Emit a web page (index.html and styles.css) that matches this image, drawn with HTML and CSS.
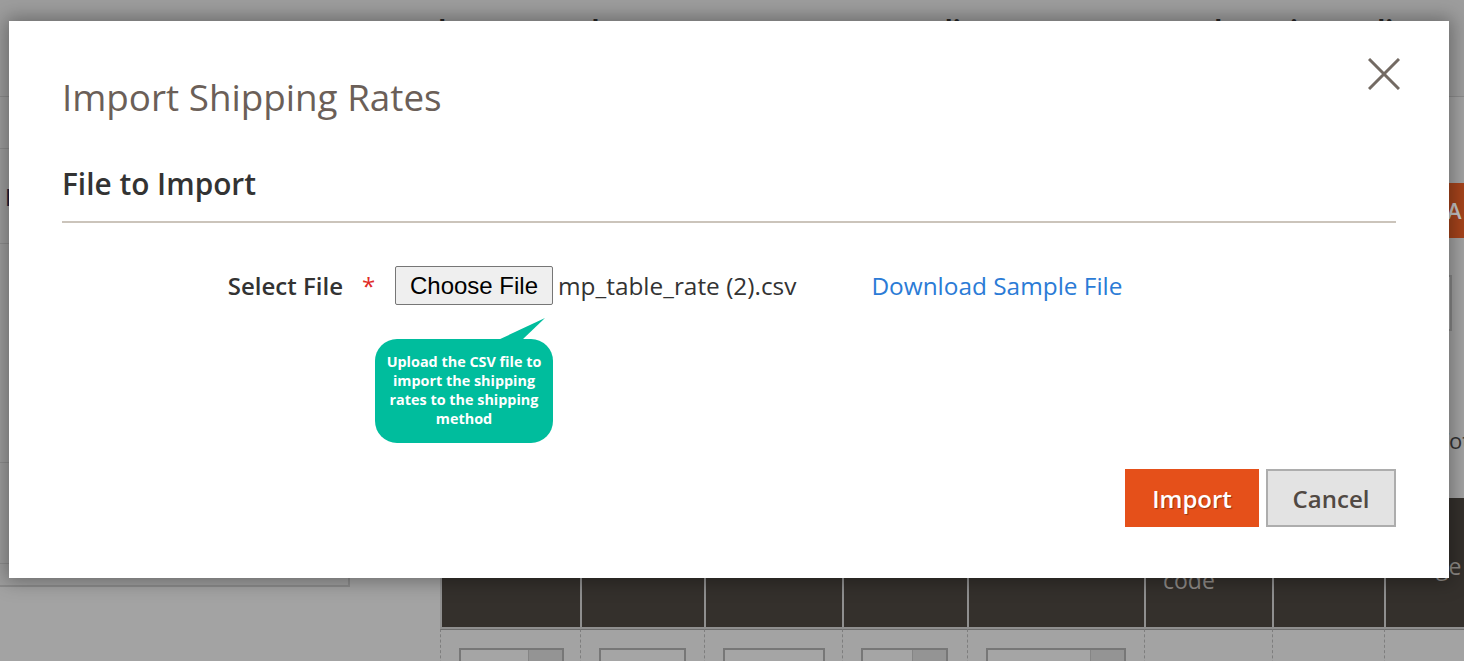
FILE: index.html
```html
<!DOCTYPE html>
<html lang="en">
<head>
<meta charset="utf-8">
<title>Import Shipping Rates</title>
<link rel="stylesheet" href="styles.css">
</head>
<body>

<div class="page">
  <div class="page-actions">
    <span class="act act-back">&larr; Back</span>
    <span class="act act-delete">Delete</span>
    <span class="act act-reset">Reset</span>
    <span class="act act-dup">Duplicate</span>
    <span class="act">Save and Continue Edit</span>
  </div>

  <div class="page-main">
    <div class="side-nav">
      <div class="nav-item nav-1"></div>
      <div class="nav-item nav-2"><span class="nav-title">Information</span></div>
      <div class="nav-item nav-3"></div>
      <div class="nav-item nav-4"></div>
    </div>

    <div class="content">
      <div class="toolbar"><span class="btn-add">Add</span></div>
      <div class="search-row"><span class="search-box"></span></div>
      <div class="note-row">Total 0 records found</div>

      <div class="grid">
        <div class="head-cell"></div>
        <div class="head-cell"></div>
        <div class="head-cell"></div>
        <div class="head-cell"></div>
        <div class="head-cell"></div>
        <div class="head-cell">Zip/Postal<br>code</div>
        <div class="head-cell"></div>
        <div class="head-cell head-low">Range</div>

        <div class="row-cell"><span class="input w105"><span class="addon"></span></span></div>
        <div class="row-cell"><span class="input w87"></span></div>
        <div class="row-cell"><span class="input w102"></span></div>
        <div class="row-cell"><span class="input w87"><span class="addon"></span></span></div>
        <div class="row-cell"><span class="input w140"><span class="addon"></span></span></div>
        <div class="row-cell"></div>
        <div class="row-cell"></div>
        <div class="row-cell"></div>
      </div>
    </div>
  </div>
</div>

<div class="modal">
  <h1 class="modal-title">Import Shipping Rates</h1>
  <button class="modal-close" type="button">
    <svg width="32" height="32" viewBox="0 0 32 32">
      <path d="M1 1 L31 31 M31 1 L1 31" stroke="#736a63" stroke-width="3" fill="none"/>
    </svg>
  </button>

  <h2 class="section-title">File to Import</h2>

  <div class="field-row">
    <span class="field-label">Select File</span>
    <span class="required">*</span>
    <button class="choose-btn" type="button">Choose File</button>
    <span class="file-name">mp_table_rate (2).csv</span>
    <a class="sample-link" href="#">Download Sample File</a>

    <div class="tip">Upload the CSV file to import the shipping rates to the shipping method</div>
  </div>

  <div class="modal-footer">
    <button class="btn-primary" type="button">Import</button>
    <button class="btn-secondary" type="button">Cancel</button>
  </div>
</div>

</body>
</html>
```

FILE: styles.css
```css
html, body {
    margin: 0;
    padding: 0;
}
body {
    width: 1464px;
    height: 661px;
    overflow: hidden;
    position: relative;
    background: #a3a3a3;
    font-family: "Open Sans", "Liberation Sans", sans-serif;
}

/* page behind the modal, already dimmed */
.page-actions {
    height: 97px;
    box-sizing: border-box;
    background: #9d9d9d;
    border-bottom: 1px solid #8c8c8c;
    display: flex;
    padding: 17px 0 0 359px;
    font-size: 26px;
    line-height: 26px;
    font-weight: 700;
    color: #262626;
    white-space: nowrap;
}
.act-back { width: 198px; }
.act-delete { width: 174px; }
.act-reset { width: 161px; }
.act-dup { width: 214px; }

.page-main {
    display: flex;
}
.side-nav {
    width: 350px;
    height: 490px;
    flex: none;
    box-sizing: border-box;
    background: #9e9e9e;
    border-right: 2px solid #8b8b8b;
    border-bottom: 2px solid #8b8b8b;
}
.nav-item {
    box-sizing: border-box;
    border-bottom: 1px solid #8e8e8e;
}
.nav-1 { height: 52px; }
.nav-2 { height: 95px; padding: 33px 0 0 5px; }
.nav-3 { height: 219px; }
.nav-4 { height: 101px; }
.nav-title {
    font-size: 24px;
    line-height: 30px;
    font-weight: 700;
    color: #1c1c3a;
}

.content {
    flex: 1;
    min-width: 0;
    display: flex;
    flex-direction: column;
}
.toolbar {
    margin-top: 86px;
    height: 55px;
    display: flex;
    justify-content: flex-end;
}
.btn-add {
    width: 120px;
    margin-right: -80px;
    padding-left: 23px;
    box-sizing: border-box;
    background: #a5431b;
    color: #c4c4c4;
    font-size: 22px;
    font-weight: 600;
    letter-spacing: 4px;
    line-height: 55px;
    white-space: nowrap;
}
.search-row {
    margin-top: 37px;
    height: 56px;
    display: flex;
    justify-content: flex-end;
}
.search-box {
    width: 600px;
    margin-right: 12px;
    box-sizing: border-box;
    border: 2px solid #878787;
    background: #a6a6a6;
}
.note-row {
    margin-top: 94px;
    padding-left: 1087px;
    font-size: 22px;
    line-height: 30px;
    color: #333;
    white-space: nowrap;
}

.grid {
    margin: 43px 0 0 90px;
    display: grid;
    grid-template-columns: 140px 124px 138px 125px 177px 128px 112px 140px;
}
.head-cell {
    height: 131px;
    box-sizing: border-box;
    background: #34302c;
    border-left: 2px solid #8f8f8f;
    border-bottom: 2px solid #8f8f8f;
    padding: 43px 0 0 17px;
    font-size: 23px;
    line-height: 26px;
    color: #8e8a86;
    white-space: nowrap;
}
.head-cell.head-low {
    padding: 55px 0 0 9px;
}
.row-cell {
    height: 40px;
    box-sizing: border-box;
    border-left: 1px dashed #7e7e7e;
    border-top: 1px solid #6f6f6f;
    padding: 18px 0 0 18px;
}
.input {
    display: flex;
    justify-content: flex-end;
    height: 30px;
    box-sizing: border-box;
    border: 2px solid #777;
    background: #a5a5a5;
}
.addon {
    width: 33px;
    background: #949494;
    border-left: 1px solid #858585;
}
.w105 { width: 105px; }
.w87 { width: 87px; }
.w102 { width: 102px; }
.w140 { width: 140px; }

/* modal */
.modal {
    position: absolute;
    left: 9px;
    top: 21px;
    width: 1440px;
    height: 557px;
    box-sizing: border-box;
    padding: 55px 53px 0;
    background: #fff;
    box-shadow: 0 0 18px 3px rgba(0, 0, 0, 0.34);
}
.modal-title {
    margin: 0;
    font-size: 36.8px;
    line-height: 43px;
    font-weight: 400;
    color: #6b5f58;
}
.modal-close {
    position: absolute;
    top: 37px;
    right: 49px;
    width: 32px;
    height: 32px;
    padding: 0;
    border: none;
    background: none;
}
.modal-close svg {
    display: block;
}
.section-title {
    margin: 48px 0 0;
    padding-bottom: 20px;
    border-bottom: 2px solid #cbc4bb;
    font-size: 29.8px;
    line-height: 34px;
    font-weight: 600;
    color: #333;
}

.field-row {
    position: relative;
    margin-top: 43px;
    height: 39px;
    display: flex;
    align-items: center;
    white-space: nowrap;
}
.field-label {
    width: 281px;
    text-align: right;
    font-size: 24px;
    font-weight: 600;
    color: #333;
}
.required {
    width: 52px;
    box-sizing: border-box;
    padding-left: 19px;
    font-size: 24px;
    color: #e02b27;
}
.choose-btn {
    width: 158px;
    height: 39px;
    padding: 0;
    font-family: "Liberation Sans", Arial, sans-serif;
    font-size: 24px;
    color: #000;
    background: #efefef;
    border: 1px solid #767676;
    border-radius: 2px;
}
.file-name {
    margin-left: 5px;
    font-size: 24.4px;
    color: #333;
}
.sample-link {
    margin-left: 75px;
    font-size: 24.4px;
    color: #2b7bd6;
    text-decoration: none;
}

.tip {
    position: absolute;
    left: 313px;
    top: 73px;
    width: 178px;
    height: 104px;
    box-sizing: border-box;
    padding: 13px 4px 0;
    background: #00bd9d;
    border-radius: 22px;
    color: #fff;
    font-size: 14.4px;
    line-height: 19px;
    font-weight: 700;
    text-align: center;
    white-space: normal;
}
.tip::before {
    content: "";
    position: absolute;
    left: 123px;
    top: -21px;
    width: 47px;
    height: 22px;
    background: #00bd9d;
    clip-path: polygon(0 100%, 24px 100%, 100% 0);
}

.modal-footer {
    margin-top: 164px;
    display: flex;
    justify-content: flex-end;
    gap: 7px;
}
.btn-primary,
.btn-secondary {
    height: 58px;
    font-family: "Open Sans", sans-serif;
    font-size: 24px;
    font-weight: 600;
    padding: 0;
}
.btn-primary {
    width: 134px;
    background: #e5501a;
    color: #fff;
    border: none;
    text-shadow: 1px 1px 1px rgba(0, 0, 0, 0.35);
}
.btn-secondary {
    width: 130px;
    background: #e3e3e3;
    color: #514943;
    border: 2px solid #adadad;
}
```
